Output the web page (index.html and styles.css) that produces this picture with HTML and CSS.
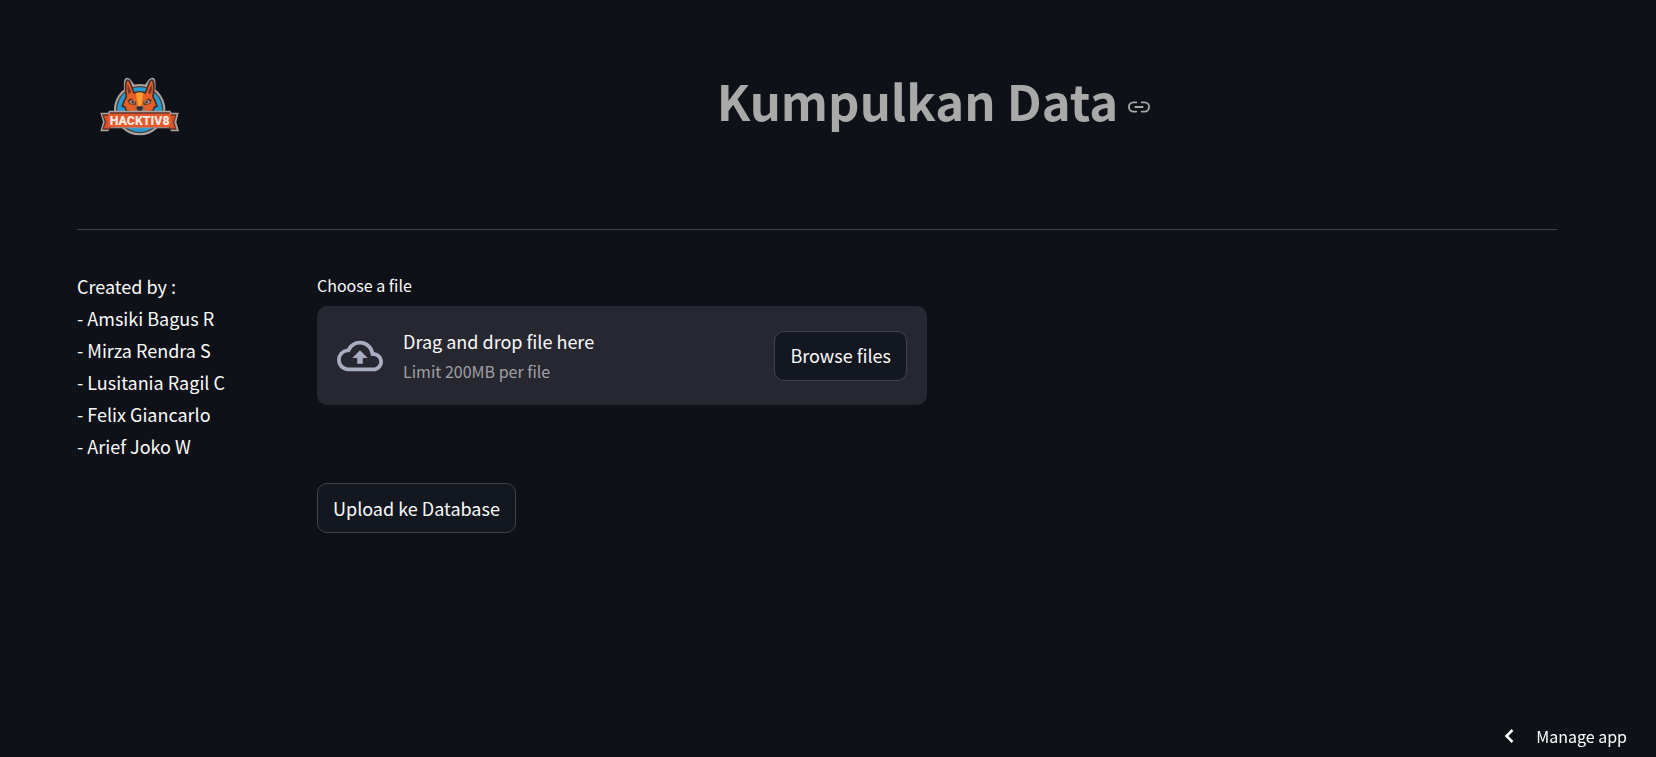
FILE: index.html
```html
<!DOCTYPE html>
<html lang="id">
<head>
<meta charset="utf-8">
<meta name="viewport" content="width=device-width, initial-scale=1">
<title>Kumpulkan Data</title>
<link rel="stylesheet" href="styles.css">
</head>
<body>
<main class="page">
  <header class="header">
    <div class="brand">
      <svg class="logo" viewBox="30 33 240 183" role="img" aria-label="Hacktiv8">
        <circle cx="149" cy="134" r="77" fill="#aaa5a0"/>
        <path d="M103 84 Q99 50 105 41 Q112 35 121 43 L138 66 H160 L177 43 Q187 35 194 41 Q199 52 195 84Z" fill="#aaa5a0"/>
        <circle cx="149" cy="134" r="71" fill="#49403f"/>
        <circle cx="149" cy="134" r="67" fill="#249bd0"/>
        <path d="M109 95 Q104 58 110 47 Q114 43 119 50 L132 84 Q149 77 166 84 L179 50 Q184 43 189 47 Q194 58 189 95 Q195 104 201 124 L193 126 L189 138 L178 140 L164 156 H134 L120 140 L109 138 L105 126 L97 124 Q103 104 109 95Z" fill="#e65f26" stroke="#452c29" stroke-width="5" stroke-linejoin="round"/>
        <path d="M113 58 L124 82 L116 88 Q110 72 113 58ZM185 58 L174 82 L182 88 Q188 72 185 58Z" fill="#7b3526"/>
        <path d="M138 84 Q149 80 160 84 L154 123 H144Z" fill="#f7a02d"/>
        <path d="M112 105 L124 100 L139 112 L136 121 L118 117ZM186 105 L174 100 L159 112 L162 121 L180 117Z" fill="#6b3828"/>
        <ellipse cx="127" cy="111" rx="8" ry="5" fill="#bcae93"/>
        <ellipse cx="171" cy="111" rx="8" ry="5" fill="#bcae93"/>
        <circle cx="128" cy="111" r="4" fill="#343632"/>
        <circle cx="170" cy="111" r="4" fill="#343632"/>
        <path d="M139 119 L149 125 L159 119 L165 136 L155 151 H143 L134 136Z" fill="#98705a"/>
        <path d="M139 127 Q149 120 159 127 L155 137 H143Z" fill="#302b2d"/>
        <path d="M149 136 V149 M138 145 Q149 137 160 145" fill="none" stroke="#3d302f" stroke-width="4"/>
        <path d="M31 143 H54 L57 137 H241 L244 143 H266 L259 171 L267 199 H242 V190 H56 V199 H31 L39 171Z" fill="#aaa5a0"/>
        <path d="M36 148 H59 V142 H239 V148 H260 L253 171 L260 194 H237 V187 H61 V194 H36 L44 171Z" fill="#63332a"/>
        <path d="M41 152 H58 V190 H41 L49 171ZM240 152 H256 L249 171 L256 190 H240Z" fill="#d94f24"/>
        <path d="M54 146 H243 V186 H54Z" fill="#e9582a"/>
        <text class="logo-text" x="149" y="181" text-anchor="middle">HACKTIV8</text>
      </svg>
    </div>
    <div class="heading">
      <h1 class="title">Kumpulkan Data</h1>
      <a class="anchor" href="#" aria-label="Link to heading">
        <svg viewBox="0 0 24 24" fill="none" stroke="currentColor" stroke-width="2" stroke-linecap="round"><path d="M15 7h3a5 5 0 0 1 0 10h-3M9 17H6A5 5 0 0 1 6 7h3M8 12h8"/></svg>
      </a>
    </div>
  </header>
  <hr class="divider">
  <div class="columns">
    <section class="credits">
      <div>Created by :</div>
      <div>- Amsiki Bagus R</div>
      <div>- Mirza Rendra S</div>
      <div>- Lusitania Ragil C</div>
      <div>- Felix Giancarlo</div>
      <div>- Arief Joko W</div>
    </section>
    <section class="upload">
      <div class="label" id="file-label">Choose a file</div>
      <div class="dropzone" role="group" aria-labelledby="file-label">
        <svg class="cloud" viewBox="0 0 24 24" fill="currentColor" aria-hidden="true"><path d="M19.35 10.04A7.49 7.49 0 0 0 12 4C9.11 4 6.6 5.64 5.35 8.04A5.994 5.994 0 0 0 0 14c0 3.31 2.69 6 6 6h13c2.76 0 5-2.24 5-5 0-2.64-2.05-4.78-4.65-4.96zM19 18H6c-2.21 0-4-1.79-4-4 0-2.05 1.53-3.76 3.56-3.97l1.07-.11.5-.95A5.469 5.469 0 0 1 12 6c2.62 0 4.88 1.86 5.39 4.43l.3 1.5 1.53.11A2.98 2.98 0 0 1 22 15c0 1.65-1.35 3-3 3zM8 13h2.55v3h2.9v-3H16l-4-4z"/></svg>
        <div class="instructions">
          <span>Drag and drop file here</span>
          <span class="limit">Limit 200MB per file</span>
        </div>
        <button class="button" type="button">Browse files</button>
      </div>
      <button class="button submit" type="button">Upload ke Database</button>
    </section>
    <section class="spare"></section>
  </div>
</main>
<button class="manage" type="button">
  <svg viewBox="0 0 10 16" fill="none" stroke="currentColor" stroke-width="2.5" aria-hidden="true"><path d="M8.500 2L2.500 8l6 6"/></svg>
  Manage app
</button>
</body>
</html>
```
FILE: styles.css
```css
* { box-sizing: border-box; }

body {
  margin: 0;
  min-height: 100vh;
  background: #0e1117;
  color: #fafafa;
  font-family: "Noto Sans CJK SC", "Noto Sans", sans-serif;
  font-size: 18px;
  line-height: 32px;
}

.page { padding: 76px 99px 40px 77px; }

.header {
  display: flex;
  gap: 20px;
  height: 153px;
}

.brand {
  flex: 0 0 220px;
  padding-left: 23px;
}

.logo {
  display: block;
  width: 80px;
  height: 61px;
}

.logo-text {
  fill: #f4e9e2;
  font-family: Roboto, sans-serif;
  font-size: 37px;
  font-weight: 900;
}

.heading {
  flex: 1;
  display: flex;
  justify-content: center;
  align-items: flex-start;
  gap: 10px;
}

.title {
  margin: 0;
  color: #a9a9a9;
  font-size: 49px;
  font-weight: 700;
  line-height: 48px;
}

.anchor {
  padding: 20px 7px 0 0;
  color: #a9a9a9;
  line-height: 0;
}

.anchor svg {
  width: 22px;
  height: 22px;
}

.divider {
  height: 1px;
  margin: 0 0 40px;
  border: 0;
  background: #414346;
}

.columns {
  display: flex;
  gap: 20px;
}

.credits { flex: 0 0 220px; }

.upload,
.spare { flex: 1; }

.label {
  height: 36px;
  font-size: 16px;
  line-height: 30px;
}

.dropzone {
  display: flex;
  align-items: center;
  padding: 19px 20px;
  min-height: 99px;
  border-radius: 10px;
  background: #262730;
}

.cloud {
  flex: none;
  width: 46px;
  height: 46px;
  margin-right: 20px;
  color: #a9adc1;
}

.instructions {
  display: flex;
  flex: 1;
  flex-direction: column;
}

.limit {
  color: #a0a0a5;
  font-size: 16px;
  line-height: 29px;
}

.button {
  height: 50px;
  padding: 0 15px 1px;
  border: 1px solid #41444c;
  border-radius: 10px;
  background: #131720;
  color: inherit;
  font: inherit;
}

.submit {
  display: block;
  margin-top: 78px;
}

.manage {
  position: fixed;
  right: 29px;
  bottom: 5px;
  display: flex;
  align-items: center;
  gap: 22px;
  padding: 0;
  border: 0;
  background: none;
  color: #ffffff;
  font: inherit;
  font-size: 16px;
}

.manage svg {
  width: 10px;
  height: 16px;
}
```
